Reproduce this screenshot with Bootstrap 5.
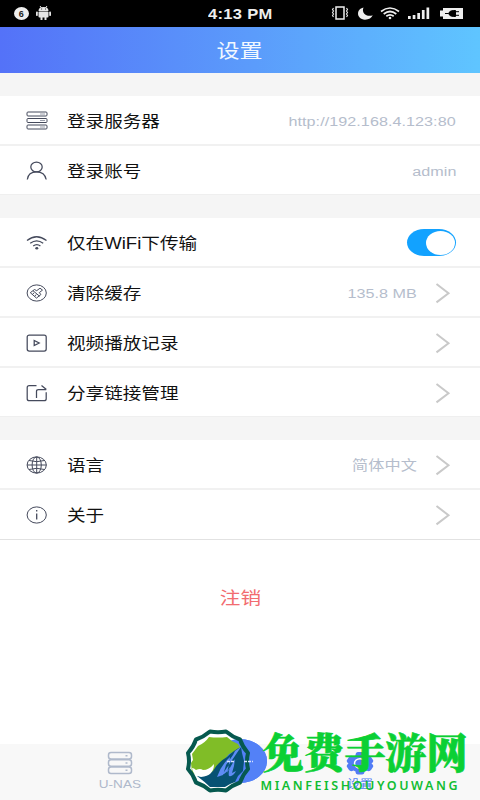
<!DOCTYPE html>
<html lang="zh-CN">
<head>
    <meta charset="UTF-8">
    <meta name="viewport" content="width=device-width, initial-scale=1.0">
    <title>设置</title>
    <link href="https://cdn.jsdelivr.net/npm/bootstrap@5.3.0/dist/css/bootstrap.min.css" rel="stylesheet">
    <style>
        body {
            font-family: "Liberation Sans", "Noto Sans CJK SC", sans-serif;
            height: 800px;
            overflow: hidden;
            background: #fff;
        }
        svg { display: block; flex-shrink: 0; }
        .screen { width: 480px; height: 800px; }

        /* wide lettering used all over the app */
        .wide { display: inline-block; transform: scaleX(1.18); transform-origin: left center; white-space: nowrap; line-height: 1; }
        .wide-end { transform-origin: right center; }
        .wide-mid { transform-origin: center; }

        .status-bar { height: 27px; background: #000; color: #eee; }
        .status-bar .clock { font-size: 14px; font-weight: 700; letter-spacing: .25px; }
        .title-bar { height: 46px; padding-top: 3px; background: linear-gradient(90deg, #5472f8, #5b9bfb 52%, #5fc5ff); color: #f2f8ff; }
        .title-bar .wide { font-size: 19.5px; }

        .settings { background: #f5f5f5; padding-top: 23px; }
        .settings .list-group { margin-bottom: 23px; }
        .settings .list-group:last-child { margin-bottom: 0; }
        .settings .list-group-item { height: 50px; padding: 1px 24px 0 26px; border: 0; border-bottom: 2px solid #f1f1f1; color: #111; }
        .settings .list-group .list-group-item:last-child { height: 49px; border-bottom: 1px solid #efefef; }
        .settings .last-group .list-group-item:last-child { height: 50px; padding-top: 0; border-bottom: 1px solid #e2e2e2; }
        .line-icon { fill: none; stroke: #454a5c; stroke-width: 1.25; }
        .thin-icon { stroke-width: 1; }
        .item-name { font-size: 15.75px; margin-left: 19px; padding-top: 3px; }
        .item-value { font-size: 13.7px; color: #b5bdcc; letter-spacing: .04px; margin-left: auto; padding-top: 3px; }
        .arrow { fill: none; stroke: #c9c9c9; stroke-width: 2; }
        .item-value + .arrow { margin-left: 18px; }
        .switch-on { width: 49px; height: 27px; background: #12a2ff; border-radius: 17px / 13.5px; padding: 1.5px 1px; }
        .switch-on span { width: 29px; height: 24px; border-radius: 50%; background: #fff; }

        .logout { padding-top: 45px; color: #f26c70; font-size: 17.5px; }
        .tab-bar { height: 56px; padding: 0 60px; background: #f8f8f8; color: #afb9cb; font-size: 11.5px; }
        .tab-bar .tab-cell { width: 120px; padding-top: 7px; }
        .tab-bar .tab-active { color: #527cf5; font-size: 11px; }
        .add-button { width: 54px; height: 44px; margin-top: -12px; border-radius: 50%; background: #5381f7; }
        .brand-mark { position: absolute; left: 182px; top: 724px; width: 298px; height: 76px; }
    </style>
</head>
<body>
<div class="screen position-relative d-flex flex-column">

    <!-- Status bar -->
    <div class="status-bar position-relative d-flex align-items-center justify-content-center">
        <span class="clock wide wide-mid">4:13 PM</span>
        <svg class="position-absolute top-0 start-0" width="480" height="27" viewBox="0 0 480 27">
            <ellipse cx="21.5" cy="13.5" rx="7.5" ry="6.5" fill="#eee"/>
            <text x="18.7" y="16.7" font-size="9" font-weight="700" fill="#222">6</text>
            <g fill="#e5e5e5">
                <path d="M38.5 11q0-4 5-4t5 4z"/>
                <path d="M40 6l1.5 2M47 6l-1.5 2" stroke="#e5e5e5"/>
                <rect x="38.5" y="11.5" width="10" height="6" rx="1"/>
                <rect x="36" y="11.5" width="1.8" height="4.5" rx=".8"/>
                <rect x="49.2" y="11.5" width="1.8" height="4.5" rx=".8"/>
                <rect x="40.5" y="17" width="2" height="3"/>
                <rect x="44.5" y="17" width="2" height="3"/>
            </g>
            <path d="M41.3 9h.8M45 9h.8" stroke="#000"/>
            <g fill="none" stroke="#eee">
                <rect x="336" y="7" width="8" height="12" stroke-width="1.5"/>
                <path d="M333.5 8l-1 1.5 1 1.5-1 1.5 1 1.5-1 1.5 1 1.5M346.5 8l1 1.5-1 1.5 1 1.5-1 1.5 1 1.5-1 1.5" stroke-width="1.1"/>
                <path d="M381 11.5q9-7 18 0M383.7 14q6.3-5 12.6 0M386.3 16.3q3.7-2.8 7.4 0" stroke-width="1.7"/>
            </g>
            <path d="M363.5 7.5C356 9 356 19 365 19.7Q371 19.5 372.7 15.3C367 17.5 361 13 363.5 7.5z" fill="#eee"/>
            <circle cx="390" cy="18" r="1.3" fill="#eee"/>
            <path d="M408 16h2.7v3H408zM412.7 15h2.7v4h-2.7zM417.3 13h2.7v6h-2.7zM421.9 10h2.7v9h-2.7zM426.5 7.5h2.7V19h-2.7z" fill="#eee"/>
            <path d="M443 8h20v11h-20v-2.5h-3v-6h3z" fill="#eee"/>
            <path d="M445 13.5h3.5q1-3 5-3h2v6h-2q-4 0-5-3M455 11.7h4M455 15.3h4" fill="#000" stroke="#000"/>
        </svg>
    </div>

    <!-- Title -->
    <div class="title-bar d-flex align-items-center justify-content-center">
        <span class="wide wide-mid">设置</span>
    </div>

    <!-- Settings groups -->
    <div class="settings">
        <div class="list-group list-group-flush">
            <div class="list-group-item d-flex align-items-center">
                <svg class="line-icon thin-icon" width="22" height="20" viewBox="0 0 22 20">
                    <rect x="1" y="1" width="20" height="4" rx="1"/><rect x="1" y="7.5" width="20" height="4" rx="1"/><rect x="1" y="14" width="20" height="4" rx="1"/>
                    <path d="M14 3h5M14 9.5h5M14 16h5" stroke="#9a9eab"/>
                </svg>
                <span class="item-name wide">登录服务器</span>
                <span class="item-value wide wide-end">http://192.168.4.123:80</span>
            </div>
            <div class="list-group-item d-flex align-items-center">
                <svg class="line-icon" width="22" height="20" viewBox="0 0 22 20">
                    <ellipse cx="10.5" cy="6" rx="5.7" ry="4.9"/><path d="M1.3 18.5q1-7.6 9.2-7.6t9.7 7.6"/>
                </svg>
                <span class="item-name wide">登录账号</span>
                <span class="item-value wide wide-end">admin</span>
            </div>
        </div>

        <div class="list-group list-group-flush">
            <div class="list-group-item d-flex align-items-center">
                <svg class="line-icon" width="22" height="20" viewBox="0 0 22 20">
                    <path d="M1 7.5q9.5-7.5 19.5 0M4.2 10.3q6.5-5 13 0M7.2 13q3.6-2.8 7.2 0"/>
                    <ellipse cx="10.8" cy="15.2" rx="1.5" ry="1.3" fill="#454a5c" stroke="none"/>
                </svg>
                <span class="item-name wide">仅在WiFi下传输</span>
                <div class="switch-on ms-auto d-flex justify-content-end"><span></span></div>
            </div>
            <div class="list-group-item d-flex align-items-center">
                <svg class="line-icon thin-icon" width="22" height="20" viewBox="0 0 22 20">
                    <ellipse cx="10.7" cy="10" rx="9.6" ry="8.1"/>
                    <path d="M4.3 9.7l4.2-3.2 2.2 1.2 3.3-2.5 2.5 1.9-3.2 2.5 1.6 1.9-4.4 3.6zM7 7.7l6.500 5.5M6.500 11.2l1.6-1.3M8.7 13l1.6-1.3"/>
                </svg>
                <span class="item-name wide">清除缓存</span>
                <span class="item-value wide wide-end">135.8 MB</span>
                <svg class="arrow" width="21" height="22" viewBox="0 0 21 22"><path d="M1.5 2l12 9.2-12 9.2"/></svg>
            </div>
            <div class="list-group-item d-flex align-items-center">
                <svg class="line-icon" width="22" height="20" viewBox="0 0 22 20">
                    <rect x="1.2" y="2" width="19" height="16" rx="2"/><path d="M8.2 7.5v5l5-2.5z"/>
                </svg>
                <span class="item-name wide">视频播放记录</span>
                <svg class="arrow ms-auto" width="21" height="22" viewBox="0 0 21 22"><path d="M1.5 2l12 9.2-12 9.2"/></svg>
            </div>
            <div class="list-group-item d-flex align-items-center">
                <svg class="line-icon" width="22" height="20" viewBox="0 0 22 20">
                    <path d="M10.5 2.5H3.2q-2 0-2 2v11.2q0 2 2 2h15q2 0 2-2V9.3M10.5 15V8.3q0-1.800 2-1.800h7.7M15.5 2.5l4.9 4"/>
                </svg>
                <span class="item-name wide">分享链接管理</span>
                <svg class="arrow ms-auto" width="21" height="22" viewBox="0 0 21 22"><path d="M1.5 2l12 9.2-12 9.2"/></svg>
            </div>
        </div>

        <div class="list-group list-group-flush last-group">
            <div class="list-group-item d-flex align-items-center">
                <svg class="line-icon thin-icon" width="22" height="20" viewBox="0 0 22 20">
                    <ellipse cx="10.7" cy="10" rx="9.6" ry="8.1"/><ellipse cx="10.7" cy="10" rx="4.6" ry="8.1"/>
                    <path d="M10.7 2v16M1 10h19.500M3 5.5q7.7 2.4 15.4 0M3 14.5q7.7-2.4 15.4 0"/>
                </svg>
                <span class="item-name wide">语言</span>
                <span class="item-value wide wide-end">简体中文</span>
                <svg class="arrow" width="21" height="22" viewBox="0 0 21 22"><path d="M1.5 2l12 9.2-12 9.2"/></svg>
            </div>
            <div class="list-group-item d-flex align-items-center">
                <svg class="line-icon thin-icon" width="22" height="20" viewBox="0 0 22 20">
                    <ellipse cx="10.7" cy="10" rx="9.6" ry="8.1"/><path d="M10.7 8.500v6M10.7 5v1.6" stroke-width="1.3"/>
                </svg>
                <span class="item-name wide">关于</span>
                <svg class="arrow ms-auto" width="21" height="22" viewBox="0 0 21 22"><path d="M1.5 2l12 9.2-12 9.2"/></svg>
            </div>
        </div>
    </div>

    <div class="logout text-center"><span class="wide wide-mid">注销</span></div>

    <!-- Bottom tabs -->
    <div class="tab-bar d-flex mt-auto">
        <div class="tab-cell d-flex flex-column align-items-center">
            <svg width="26" height="24" viewBox="0 0 26 24" fill="none" stroke="#afb9cb" stroke-width="1.5">
                <rect x="1.5" y="1.500" width="23" height="6.5" rx="2.5"/><rect x="1.5" y="8.8" width="23" height="6.5" rx="2.5"/><rect x="1.5" y="16.1" width="23" height="6.5" rx="2.5"/>
                <path d="M18.5 4.700h2M18.5 12h2M18.5 19.300h2"/>
            </svg>
            <span class="wide wide-mid mt-1">U-NAS</span>
        </div>
        <div class="tab-cell d-flex justify-content-center">
            <div class="add-button"></div>
        </div>
        <div class="tab-cell tab-active d-flex flex-column align-items-center">
            <svg width="30" height="24" viewBox="0 0 30 24">
                <path d="M10.500 4.500Q10.500 1 13 1h4q2.500 0 2.500 3.500l2 1q3-1.500 4.500.5l2 3q1 2-1.500 3.500 2.500 1.500 1.500 3.500l-2 3q-1.500 2-4.500.5l-2 1Q19.500 23.500 17 23.500h-4q-2.500 0-2.500-3l-2-1Q5.500 21 4 19l-2-3q-1-2 1.500-3.500Q1 11 2 9l2-3q1.500-2 4.500-.5z" fill="#527cf5"/>
                <ellipse cx="15" cy="12.300" rx="5.5" ry="4.6" fill="none" stroke="#fff" stroke-width="1.5"/>
            </svg>
            <span class="wide wide-mid mt-1">设置</span>
        </div>
    </div>

    <!-- Site badge over the tabs -->
    <svg class="brand-mark" viewBox="182 724 298 76">
        <path d="M210 731.5h16l14 8 8 13.5v16l-8 13.5-14 8h-16l-14-8-8-13.5v-16l8-13.5z" fill="#fff"/>
        <ellipse cx="240" cy="761" rx="27" ry="22" fill="#5381f7"/>
        <path d="M209 737q9 1 18 0 5 5 11 7l3 5-12 5-14 18q-11 8-23 1l-1-10 2-3-1-6 6-8q7-3 11-9z" fill="#80bd27"/>
        <path d="M197 776q9 1 16-5 5-9 14-14 7-7 14-10l1 6 2 8-1 10-5 5-3 6q-6 2-10 5h-15q-5-5-13-11z" fill="#075273"/>
        <path d="M192 768q2 0 4 2 4-2 7 0 6 0 11-6 0 12-13 13l-6-2q-3-4-3-7z" fill="#fff"/>
        <path d="M243 744q-4 5-8 7l-2 4-7 10-3 10-6 2q4-12 13-20-1 8-3 16l8-14-1 7-2 7 4-2q-3 6-7 5-1-3 1-9-3 6-8 8" fill="#5e8cf5"/>
        <path d="M210 731.5Q218 733 226 731.5 232.5 737 240 739.5 242.5 747 248 753 246 761 248 769 242.5 775 240 782.5 232.5 785 226 790.5 218 789 210 790.5 203.5 785 196 782.5 193.5 775 188 769 190 761 188 753 193.5 747 196 739.5 203.5 737 210 731.5z" fill="none" stroke="#06594f" stroke-width="4" stroke-linejoin="round"/>
        <path d="M227 761.5h7M244 761.5h9" stroke="#d7e3ff" stroke-width="1.3" stroke-dasharray="3 1"/>
        <text x="262.5" y="767.5" font-family="'Noto Serif CJK SC','Noto Sans CJK SC',serif" font-size="41" font-weight="900" fill="#0bd034" stroke="#0bd034" stroke-width=".7" textLength="205" lengthAdjust="spacing">免费手游网</text>
        <text x="260.5" y="789.5" font-family="'Noto Sans',sans-serif" font-size="12.5" font-weight="600" fill="#10bd31" textLength="197" lengthAdjust="spacing">MIANFEISHOUYOUWANG</text>
    </svg>
</div>

<script src="https://cdn.jsdelivr.net/npm/bootstrap@5.3.0/dist/js/bootstrap.bundle.min.js"></script>
</body>
</html>
